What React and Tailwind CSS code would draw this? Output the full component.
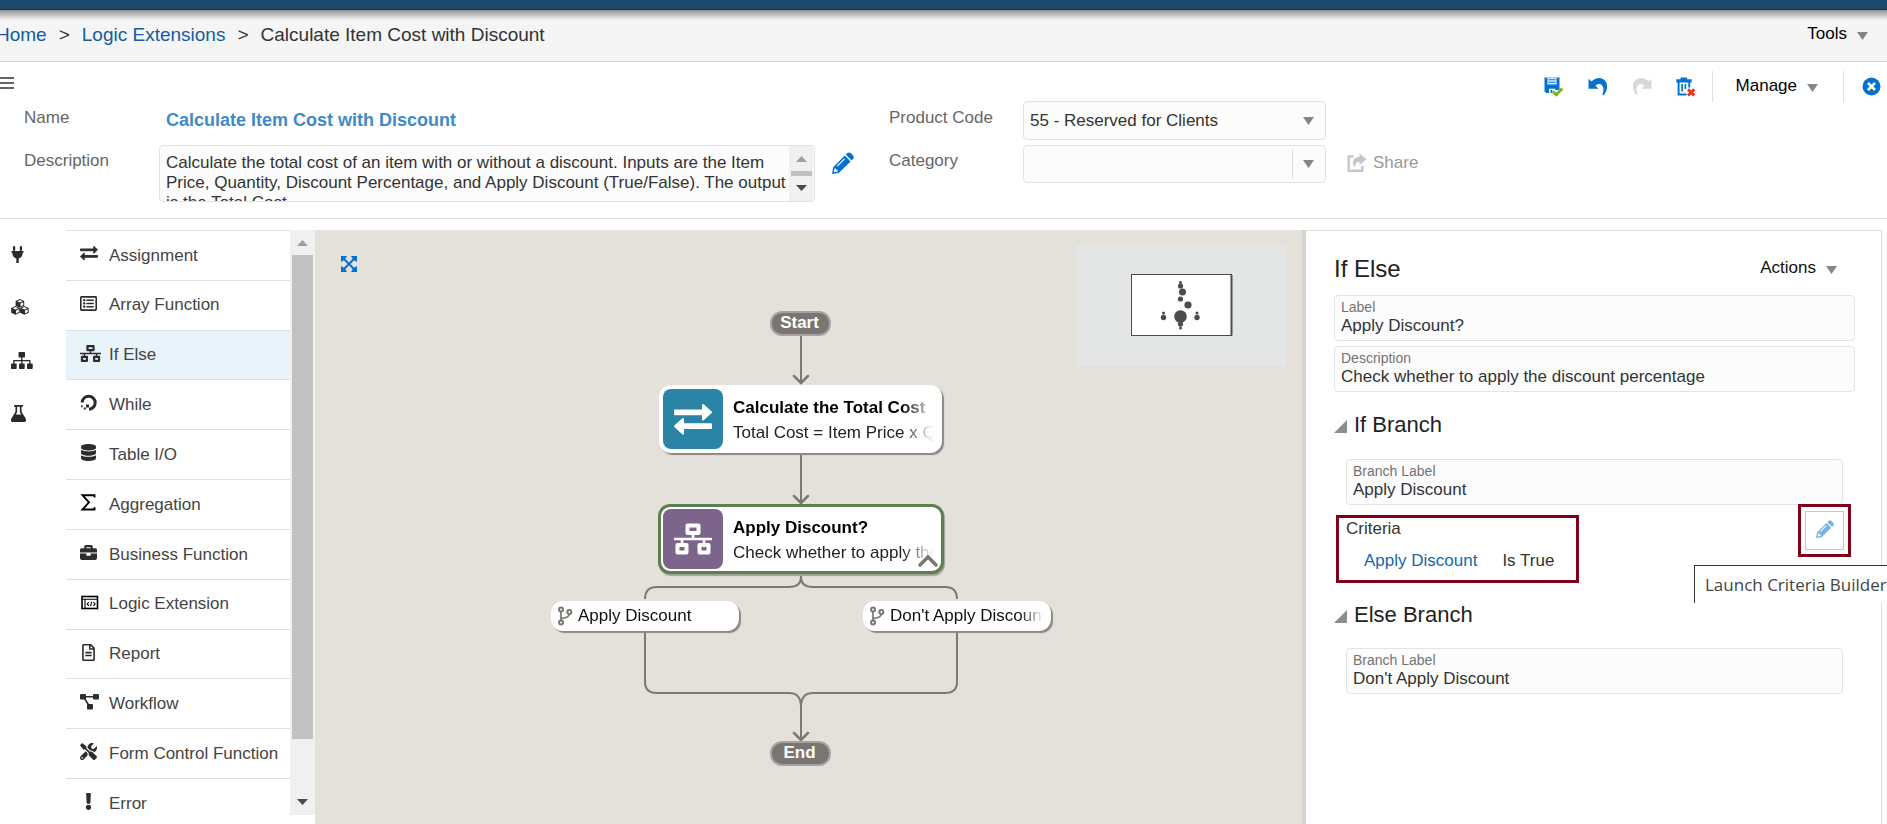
import React from "react";
import {
  FaDatabase,
  FaBriefcase,
  FaRegFileAlt,
  FaRegListAlt,
  FaTools,
  FaExclamation,
} from "react-icons/fa";

const Down = ({ className = "" }) => (
  <svg className={className} width="11" height="8" viewBox="0 0 11 8" aria-hidden="true">
    <path d="M0 0h11L5.500 8z" fill="#84878a" />
  </svg>
);

const Pencil = ({ size, color }) => (
  <svg width={size} height={size} viewBox="0 0 22 22" aria-hidden="true">
    <path
      fill={color}
      fillRule="evenodd"
      d="M15.200 1.200Q17 -.4 19 1.300L21 3.400Q22.600 5.200 21 7L19.600 8.400 13.800 2.600ZM12.800 3.600 18.600 9.400 6.800 21 0 22 1.200 15.200ZM2.600 16.400 1.800 20.200 5.600 19.600 5.700 17.800 4 17.700 3.900 16.200ZM12.200 6.500 4.800 13.800 5.600 14.600 13 7.300Z"
    />
  </svg>
);

const Exchange = ({ size }) => (
  <svg width={size} height={size} viewBox="0 0 38 38" fill="currentColor" stroke="currentColor" strokeLinejoin="round" aria-hidden="true">
    <path strokeWidth="2" d="M1 10.500h28V5l8 7.300-8 7.300v-5.400H1zM37 24.300H9V19l-8 7.300 8 7.300V28h28z" />
  </svg>
);

const Network = ({ size }) => (
  <svg width={size} height={size} viewBox="0 0 38 38" aria-hidden="true">
    <g fill="none" stroke="currentColor" strokeWidth="4" strokeLinejoin="round">
      <rect x="13.500" y="5.500" width="11" height="7.500" />
      <rect x="3.500" y="25" width="9" height="7.500" />
      <rect x="25.500" y="25" width="9" height="7.500" />
    </g>
    <path d="M0 19h38M19 13v6M8 19v6M30 19v6" stroke="currentColor" strokeWidth="2.600" fill="none" />
  </svg>
);

const Loop = () => (
  <svg width="18" height="18" viewBox="0 0 18 18" aria-hidden="true">
    <path d="M2.200 8.500A6.500 6.500 0 1 1 9 15.200" fill="none" stroke="currentColor" strokeWidth="3" />
    <path d="M6 10.500h3v3H6zM3.800 13.500h2v2h-2zM1 11.500h1.700v1.700H1z" fill="currentColor" />
  </svg>
);

const Sigma = () => (
  <svg width="17" height="17" viewBox="0 0 17 17" aria-hidden="true">
    <path d="M14.500 3.500V1.300H2.500L9 8.300 2.500 15.500h12v-2.200" fill="none" stroke="#000" strokeWidth="1.900" />
  </svg>
);

const CodeWindow = () => (
  <svg width="19" height="15" viewBox="0 0 19 15" fill="none" stroke="#000" aria-hidden="true">
    <rect x="2" y="1.500" width="15.500" height="12" strokeWidth="1.600" />
    <path d="M2 4.300h15.500M5 4v9.500" strokeWidth="1.100" />
    <path d="M8.900 7 7.200 8.900l1.700 1.900M13.400 7l1.700 1.900-1.700 1.900M11.800 6.800l-1.300 4.200" strokeWidth="1.100" />
  </svg>
);

const Workflow = () => (
  <svg width="19" height="16" viewBox="0 0 19 16" fill="currentColor" aria-hidden="true">
    <rect x="0" y="0" width="6" height="5.500" rx="1" />
    <rect x="13" y="0" width="6" height="5.500" rx="1" />
    <rect x="7" y="10" width="6" height="5.500" rx="1" />
    <path d="M5 2.700h9M4.500 4.500l4.500 7" stroke="currentColor" strokeWidth="1.500" />
  </svg>
);

const Plug = () => (
  <svg width="13" height="17" viewBox="0 0 13 17" fill="currentColor" aria-hidden="true">
    <rect x="2" y="0" width="2.200" height="5" rx="1" />
    <rect x="8.800" y="0" width="2.200" height="5" rx="1" />
    <path d="M.5 5h12v1.800h-.8c0 3-1.600 5.100-4 5.600V17H5.300v-4.600c-2.400-.5-4-2.600-4-5.600H.5z" />
  </svg>
);

const Flask = () => (
  <svg width="15" height="17" viewBox="0 0 15 17" aria-hidden="true">
    <path d="M3 .9h9M5.300 1v6L1 14.200Q.3 16.100 2 16.200h11q1.700-.1 1-2L9.700 7V1" fill="none" stroke="currentColor" strokeWidth="1.700" />
    <path d="M4 9.500h7l3.500 6-1 1.200h-12l-1-1.200z" fill="currentColor" />
  </svg>
);

const Cube = ({ x, y }) => (
  <g transform={`translate(${x} ${y})`}>
    <path d="M4.300 0 8.600 1.900v4.800L4.300 8.800 0 6.700V1.900z" fill="currentColor" />
    <path d="M4.300 1 7.100 2.200 4.300 3.400 1.500 2.200zM4.900 4.500 7.600 3.300v2.800L4.900 7.400z" fill="#fff" />
  </g>
);
const Cubes = () => (
  <svg width="18" height="16" viewBox="0 0 18 16" aria-hidden="true">
    <Cube x={4.600} y={0} />
    <Cube x={0.200} y={7} />
    <Cube x={9.100} y={7} />
  </svg>
);

const Tree = () => (
  <svg width="22" height="17" viewBox="0 0 22 17" fill="currentColor" aria-hidden="true">
    <rect x="7.500" y="0" width="6.500" height="5.500" rx=".8" />
    <rect x="0" y="11.500" width="5.700" height="5.500" rx=".8" />
    <rect x="8" y="11.500" width="5.700" height="5.500" rx=".8" />
    <rect x="16" y="11.500" width="5.700" height="5.500" rx=".8" />
    <path d="M10.800 5v7M2.900 12V8.700h15.900V12" fill="none" stroke="currentColor" strokeWidth="1.300" />
  </svg>
);

const SaveIcon = () => (
  <svg width="20" height="20" viewBox="0 0 20 20" aria-hidden="true">
    <path fill="#0572ce" fillRule="evenodd" d="M.5.500h15V13h-4.200v-1.300H5V16H2.300L.5 14.500zM6.500 13h1.800v3H6.500z" />
    <path fill="#cfe4f7" d="M3.400.5h9.200v7H3.400z" />
    <path d="M4.500 2.700h7M4.500 5.300h7" stroke="#3d90d9" strokeWidth="1.300" />
    <path d="m8.700 14.500 3.600 3.300 6-6.300" fill="none" stroke="#76b41e" strokeWidth="2.700" />
  </svg>
);

const UndoIcon = ({ color, flip }) => (
  <svg width="20" height="19" viewBox="0 0 20 19" aria-hidden="true">
    <g transform={flip ? "matrix(-1 0 0 1 20 0)" : undefined}>
      <path fill={color} d="M.5 1.800 3.500 4.600C8-.6 15.600-.2 18.300 5.500c1.700 3.900.6 9-2.800 12.700l-1.200-.4c1.500-3.700 1.700-7.200-.2-9.400-1.800-2.100-4.600-2-6.600.4l3 2.900H.5z" />
    </g>
  </svg>
);

const DeleteIcon = () => (
  <svg width="20" height="20" viewBox="0 0 20 20" aria-hidden="true">
    <path fill="#0572ce" fillRule="evenodd" d="M4.500.5h6.600v1.700h4.500v3.400h-1.300v5h-2V5.600H3.600v11h7v1.900H1.600V5.600H.3V2.200h4.200zM5.300 7h1.700v7.500H5.300zM8.500 7h1.700v5H8.500z" />
    <path d="m12 12.300 6.300 6.300M18.300 12.300 12 18.600" stroke="#e8311f" strokeWidth="2.800" />
  </svg>
);

const CloseIcon = () => (
  <svg width="19" height="19" viewBox="0 0 19 19" aria-hidden="true">
    <circle cx="9.500" cy="9.500" r="9" fill="#0572ce" />
    <path d="m6 6 7 7M13 6l-7 7" stroke="#fff" strokeWidth="2.600" />
  </svg>
);

const ShareIcon = () => (
  <svg width="20" height="20" viewBox="0 0 20 20" aria-hidden="true">
    <path d="M6.500 3.500H1.700v14.300h13.600V13" fill="none" stroke="#c4c6c8" strokeWidth="2.400" />
    <path d="M12.500.5 19.500 6.300 12.500 12V8.900C9 8.800 8 10.500 8.600 14.800 4.500 12 4.600 4.400 12.500 3.800z" fill="#c4c6c8" />
  </svg>
);

const ExpandIcon = () => (
  <svg width="16" height="16" viewBox="0 0 16 16" aria-hidden="true">
    <path d="M3 3l10 10M13 3L3 13" stroke="#0572ce" strokeWidth="2" />
    <path fill="#0572ce" d="M0 0h6L4.800 2.200 2.200 4.800 0 6zM16 0v6l-2.200-1.200-2.600-2.600L10 0zM0 16v-6l2.200 1.200 2.600 2.600L6 16zM16 16h-6l1.200-2.200 2.600-2.600L16 10z" />
  </svg>
);

const Branch = () => (
  <svg width="16" height="20" viewBox="0 0 16 20" fill="none" stroke="#7a7570" strokeWidth="2" aria-hidden="true">
    <circle cx="4" cy="3.500" r="2" />
    <circle cx="4" cy="16.500" r="2" />
    <circle cx="12.300" cy="6" r="2" />
    <path d="M4 5.500v9M12.200 8c-.1 3-2.400 3.600-7.700 4.500" strokeWidth="1.700" />
  </svg>
);

const Scroll = ({ up, thumb, className = "" }) => (
  <div className={"flex shrink-0 flex-col items-center bg-[#f0f0f0] " + className} aria-hidden="true">
    <svg className="shrink-0" width="11" height="6" viewBox="0 0 11 6"><path d="M5.500 0 11 6H0z" fill={up} /></svg>
    {thumb}
    <svg className="shrink-0" width="11" height="6" viewBox="0 0 11 6"><path d="M0 0h11L5.500 6z" fill="#4a4a4a" /></svg>
  </div>
);

const functions = [
  ["Assignment", <Exchange size={18} />],
  ["Array Function", <FaRegListAlt size={17} />],
  ["If Else", <Network size={21} />],
  ["While", <Loop />],
  ["Table I/O", <FaDatabase size={17} />],
  ["Aggregation", <Sigma />],
  ["Business Function", <FaBriefcase size={17} />],
  ["Logic Extension", <CodeWindow />],
  ["Report", <FaRegFileAlt size={17} />],
  ["Workflow", <Workflow />],
  ["Form Control Function", <FaTools size={17} />],
  ["Error", <FaExclamation size={17} />],
];

const Field = ({ id, label, value }) => (
  <div className="flex h-[46px] flex-col rounded-sm border border-[#e2e4e6] bg-[#fcfcfc] px-1.5 pt-0.5">
    <label htmlFor={id} className="text-[14px] leading-[18px] text-[#737373]">{label}</label>
    <input id={id} defaultValue={value} className="w-full bg-transparent text-[17px] leading-[19px] text-[#333] outline-none" />
  </div>
);

const SectionTitle = ({ children }) => (
  <h3 className="flex items-center text-[22px] leading-[26px] text-[#222]">
    <button type="button" aria-label="Toggle section" className="mr-[7px] flex pt-0.5">
      <svg width="13" height="13" viewBox="0 0 13 13"><path d="M13 0v13H0z" fill="#8b8e91" /></svg>
    </button>
    {children}
  </h3>
);

const fade = "overflow-hidden whitespace-nowrap [mask-image:linear-gradient(to_right,#000_84%,transparent)]";

const Step = ({ className, tile, icon, title, text }) => (
  <div className={"absolute flex rounded-xl bg-white " + className}>
    <div className={"flex size-[60px] shrink-0 items-center justify-center rounded-lg text-white " + tile}>{icon}</div>
    <div className="ml-2.5 w-[201px] pt-[6px] text-[17px] text-black">
      <div className={"font-bold leading-[25px] " + fade}>{title}</div>
      <div className={"leading-[26px] text-[#222] " + fade}>{text}</div>
    </div>
  </div>
);

const BranchNode = ({ className, children }) => (
  <div className={"absolute flex h-[30px] w-[188px] items-center rounded-xl bg-white pl-1.5 text-[17px] text-[#111] shadow-[2px_2px_1px_#8b8883] " + className}>
    <Branch />
    <div className={"ml-[5px] w-[154px] leading-[26px] " + fade}>{children}</div>
  </div>
);

const Pill = ({ className, children }) => (
  <div className={"absolute flex h-[25px] w-[61px] items-center justify-center rounded-xl border-2 border-[#a5a4a3] bg-[#7a7570] pr-0.5 pb-0.5 text-[17px] font-bold leading-[20px] text-white " + className}>{children}</div>
);

const selectCls = "h-full w-full appearance-none rounded-sm border border-[#e0e2e4] bg-[#fcfcfc] px-1.5 text-[17px] text-[#333] outline-none";

export default function App() {
  return (
    <div className="flex h-screen flex-col overflow-hidden bg-white font-['Liberation_Sans',Arial,sans-serif] text-[17px] text-[#333]">
      <div className="h-[10px] shrink-0 border-b border-[#173450] bg-[#1e4a6e]" />
      <nav className="flex h-[52px] shrink-0 items-start justify-between border-b border-[#d3dbe3] bg-[linear-gradient(to_bottom,#929292,#f5f5f5_10px)] pr-[19px]" aria-label="Breadcrumb">
        <div className="-ml-1 flex pt-[14px] text-[19px] leading-[22px]">
          <a href="#home" className="text-[#145c9e]">Home</a>
          <span className="mx-3">&gt;</span>
          <a href="#logic" className="text-[#145c9e]">Logic Extensions</a>
          <span className="mx-3">&gt;</span>
          <span>Calculate Item Cost with Discount</span>
        </div>
        <button type="button" className="flex items-center pt-[13px] leading-[22px] text-black">
          Tools <Down className="mt-1 ml-2.5" />
        </button>
      </nav>

      <header className="shrink-0 border-b border-[#e0e0e0] pb-4">
        <div className="flex h-[39px] items-start justify-between pt-[9px]">
          <button type="button" aria-label="Menu" className="mt-1.5">
            <svg width="14" height="12" viewBox="0 0 14 12"><path d="M0 1h14M0 6h14M0 11h14" stroke="#333" strokeWidth="1.500" /></svg>
          </button>
          <div className="flex h-[31px] items-center">
            <button type="button" aria-label="Save" className="mr-6"><SaveIcon /></button>
            <button type="button" aria-label="Undo" className="mr-6"><UndoIcon color="#0572ce" /></button>
            <button type="button" aria-label="Redo" className="mr-6"><UndoIcon color="#d6d8da" flip /></button>
            <button type="button" aria-label="Delete" className="mr-4"><DeleteIcon /></button>
            <button type="button" className="flex h-full items-center border-x border-[#e0e0e0] pr-[25px] pl-[23px] pb-0.5 text-black">
              Manage <Down className="mt-1 ml-2.5" />
            </button>
            <button type="button" aria-label="Close" className="mr-1.5 ml-[18px]"><CloseIcon /></button>
          </div>
        </div>
        <div className="flex items-start">
          <div className="grid grid-cols-[135px_656px] gap-y-[5px] pl-6">
            <span className="leading-[34px] text-[#666]">Name</span>
            <span className="h-[39px] pl-[7px] text-[18px] font-bold leading-[38px] text-[#4289c8]">Calculate Item Cost with Discount</span>
            <label htmlFor="desc" className="leading-[32px] text-[#666]">Description</label>
            <div className="flex h-[57px] overflow-hidden rounded-sm border border-[#e0e2e4] bg-[#fcfcfc] pr-px">
              <textarea
                id="desc"
                className="min-w-0 flex-1 resize-none overflow-hidden bg-transparent pt-[7px] pl-1.5 leading-[20px] text-[#333] outline-none"
                defaultValue="Calculate the total cost of an item with or without a discount. Inputs are the Item Price, Quantity, Discount Percentage, and Apply Discount (True/False). The output is the Total Cost."
              />
              <Scroll className="w-[24px] justify-between pt-[10px] pb-2.5" up="#a0a0a0" thumb={<div className="h-[5px] w-[21px] bg-[#c1c1c1]" />} />
            </div>
          </div>
          <button type="button" aria-label="Edit description" className="mt-[51px] ml-[17px]"><Pencil size={22} color="#0572ce" /></button>
          <div className="ml-[35px] grid grid-cols-[134px_303px] gap-y-[5px]">
            <label htmlFor="code" className="leading-[34px] text-[#666]">Product Code</label>
            <div className="relative h-[39px]">
              <select id="code" className={selectCls}><option>55 - Reserved for Clients</option></select>
              <Down className="pointer-events-none absolute top-4 right-3" />
            </div>
            <label htmlFor="cat" className="leading-[32px] text-[#666]">Category</label>
            <div className="relative h-[38px]">
              <select id="cat" className={selectCls}><option></option></select>
              <div className="pointer-events-none absolute top-1 right-3 flex h-[30px] items-center gap-[10px]">
                <span className="h-full w-px bg-[#dcdee0]" />
                <Down />
              </div>
            </div>
          </div>
          <button type="button" className="mt-[51px] ml-[21px] flex items-center gap-1.5 leading-[22px] text-[#999]">
            <ShareIcon /> Share
          </button>
        </div>
      </header>

      <main className="flex min-h-0 flex-1 pt-[11px]">
        <aside className="flex w-[66px] shrink-0 flex-col pt-4 pl-[11px] text-[#2a2a2a]">
          <button type="button" aria-label="Connections" className="flex h-[53px] items-start"><Plug /></button>
          <button type="button" aria-label="Modules" className="flex h-[53px] items-start"><Cubes /></button>
          <button type="button" aria-label="Structure" className="flex h-[53px] items-start"><Tree /></button>
          <button type="button" aria-label="Test" className="flex h-[53px] items-start"><Flask /></button>
        </aside>
        <div className="mb-[9px] flex w-[249px] shrink-0 overflow-hidden">
          <ul className="grid h-[598px] min-w-0 flex-1 auto-rows-fr">
            {functions.map(([name, icon]) => (
              <li key={name} className={"border-t border-[#dcdfe1] " + (name === "If Else" ? "bg-[#e8f3fa]" : "bg-white")}>
                <button type="button" className="flex h-full w-full items-center whitespace-nowrap pl-3.5 text-left text-[#444]">
                  <span className="flex w-[29px] pb-1 text-[#2c2c2c]">{icon}</span>
                  {name}
                </button>
              </li>
            ))}
          </ul>
          <Scroll className="w-[25px] pt-2.5 pb-2.5" up="#a0a0a0" thumb={<><div className="mt-[9px] w-[21px] flex-[8] bg-[#c1c1c1]" /><div className="flex-1" /></>} />
        </div>

        <section className="relative min-w-0 flex-1 overflow-hidden bg-[#e4e1db]" aria-label="Flow diagram">
          <button type="button" aria-label="Expand" className="absolute top-[26px] left-[26px]"><ExpandIcon /></button>
          <svg className="absolute top-0 left-0" width="987" height="594" viewBox="315 230 987 594" fill="none" stroke="#7d7872" strokeWidth="2" aria-hidden="true">
            <path d="M801 335v48M801 455v47M801 575v2q0 10-12 10H657q-12 0-12 12M801 575v2q0 10 12 10h132q12 0 12 12M645 632v50q0 11 12 11h132q12 0 12 14v33M957 632v50q0 11-12 11H813q-12 0-12 14" />
            <path d="m794 376 7 7 7-7M794 496l7 7 7-7M794 733l7 7 7-7" strokeWidth="2.500" strokeLinecap="round" />
          </svg>
          <Pill className="top-[81px] left-[455px]">Start</Pill>
          <Step
            className="top-[155px] left-[344px] h-[68px] w-[283px] p-1 shadow-[2px_2px_1px_#8b8883]"
            tile="bg-[#2a84a5]"
            icon={<Exchange size={38} />}
            title="Calculate the Total Cost"
            text="Total Cost = Item Price x Quantity"
          />
          <Step
            className="top-[274px] left-[343px] h-[70px] w-[286px] border-[3px] border-[#5c7f4e] p-0.5 shadow-[1px_2px_1px_#a3a09b]"
            tile="bg-[#7d648b]"
            icon={<Network size={38} />}
            title="Apply Discount?"
            text="Check whether to apply the discount"
          />
          <svg className="absolute top-[324px] left-[602px]" width="22" height="14" viewBox="0 0 22 14" aria-hidden="true">
            <path d="m3 11 8-8 8 8" fill="none" stroke="#7a7570" strokeWidth="3.500" strokeLinecap="round" />
          </svg>
          <BranchNode className="top-[371px] left-[236px]">Apply Discount</BranchNode>
          <BranchNode className="top-[371px] left-[548px]">Don't Apply Discount</BranchNode>
          <Pill className="top-[511px] left-[455px]">End</Pill>
          <div className="absolute top-[15px] right-[16px] flex h-[121px] w-[210px] items-center justify-center bg-[#e4e6e5]">
            <svg width="102" height="62" viewBox="0 0 102 62" className="mb-0.5 ml-0.5" role="img" aria-label="Overview">
              <rect x=".5" y=".5" width="100" height="61" fill="#fff" stroke="#4a4b4d" />
              <path d="M100.500 1v60.500" stroke="#4a4b4d" strokeWidth="2" />
              <g fill="#4a4b4d">
                <circle cx="49.500" cy="8.500" r="1.500" /><circle cx="49.500" cy="12" r="2.600" />
                <circle cx="51.500" cy="18" r="3.500" /><circle cx="49.500" cy="25" r="2.600" />
                <circle cx="57" cy="31" r="3.600" /><circle cx="49.500" cy="42.500" r="6.300" />
                <circle cx="49.500" cy="50" r="2.600" /><circle cx="49.500" cy="54" r="1.500" />
                <circle cx="32.500" cy="39" r="1.500" /><circle cx="32.500" cy="43.500" r="2.700" />
                <circle cx="66" cy="39" r="1.500" /><circle cx="66" cy="43.500" r="2.700" />
              </g>
            </svg>
          </div>
        </section>

        <section className="relative mr-[5px] w-[580px] shrink-0 border-t border-r border-l-4 border-t-[#dcdcdc] border-r-[#dcdcdc] border-l-[#d8d3d2] pr-[26px] pl-7" aria-label="If Else properties">
          <div className="flex items-start justify-between pt-[22px] pr-[18px]">
            <h2 className="text-[24px] leading-[32px] text-[#222]">If Else</h2>
            <button type="button" className="flex items-center pt-1 leading-[22px] text-[#111]">
              Actions <Down className="mt-1 ml-2.5" />
            </button>
          </div>
          <div className="mt-2.5 flex flex-col gap-[5px]">
            <Field id="f-label" label="Label" value="Apply Discount?" />
            <Field id="f-desc" label="Description" value="Check whether to apply the discount percentage" />
          </div>
          <div className="pt-5">
            <SectionTitle>If Branch</SectionTitle>
            <div className="mt-[21px] px-3">
              <Field id="f-if" label="Branch Label" value="Apply Discount" />
            </div>
            <div className="flex items-start justify-between pr-1 pl-0.5">
              <div className="mt-[10px] h-[68px] w-[243px] border-[3px] border-[#800018] pl-[7px]">
                <div className="leading-[22px]">Criteria</div>
                <div className="mt-[9px] flex gap-[25px] pl-[18px] leading-[24px]">
                  <a href="#criteria" className="text-[#1269a8]">Apply Discount</a>
                  <span>Is True</span>
                </div>
              </div>
              <div className="-mt-px h-[53px] w-[53px] border-[3px] border-[#800018] bg-white p-1">
                <button type="button" aria-label="Launch Criteria Builder" className="flex h-full w-full items-center justify-center border border-[#c4c7ca] pb-1">
                  <Pencil size={18} color="#74b4e4" />
                </button>
              </div>
            </div>
          </div>
          <div className="pt-[19px]">
            <SectionTitle>Else Branch</SectionTitle>
            <div className="mt-5 px-3">
              <Field id="f-else" label="Branch Label" value="Don't Apply Discount" />
            </div>
          </div>
          <div role="tooltip" className="absolute top-[334px] -right-1.5 h-[38px] w-[193px] whitespace-nowrap border-t border-l border-[#333] bg-white pl-2.5 font-['Open_Sans',sans-serif] leading-[38px] text-[#444]">
            Launch Criteria Builder
          </div>
        </section>
      </main>
    </div>
  );
}
